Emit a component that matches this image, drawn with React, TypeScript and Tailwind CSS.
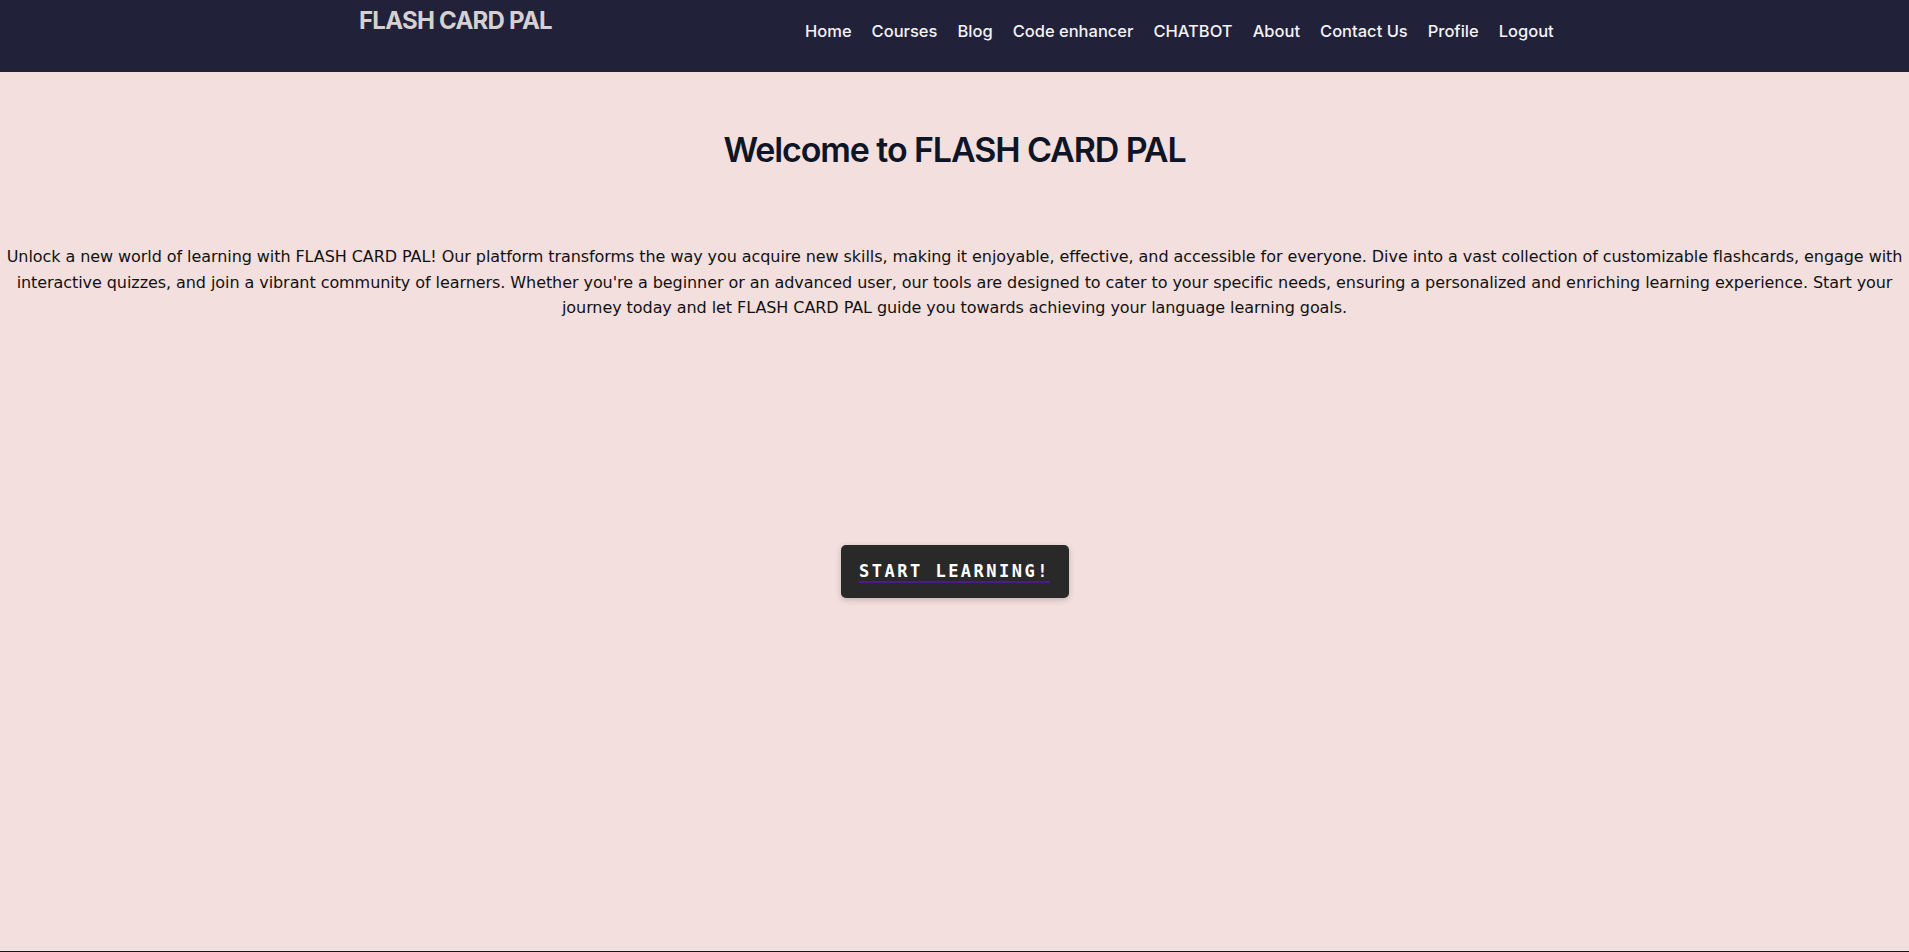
export default function App() {
  const links = ['Home', 'Courses', 'Blog', 'Code enhancer', 'CHATBOT', 'About', 'Contact Us', 'Profile', 'Logout'];

  return (
    <div className="min-h-screen bg-[#f3dfde] font-['DejaVu_Sans',sans-serif]">
      <header className="h-[72px] bg-[#21213a] flex items-start">
        <div className="w-[805px] shrink-0 pl-[359px] pt-[5px] font-['Inter',sans-serif]">
          <span className="text-[24px] leading-[32px] font-bold text-[#d6d0d0] tracking-[-0.75px]">FLASH CARD PAL</span>
        </div>
        <nav className="flex items-center gap-[20px] h-[62px] font-['Inter',sans-serif]">
          {links.map((l) => (
            <a key={l} href="#" className="text-[16.5px] font-medium text-[#f4f2f2]">
              {l}
            </a>
          ))}
        </nav>
      </header>

      <main className="h-[879px] flex flex-col items-center">
        <h1 className="mt-[57px] text-[34px] leading-[41px] font-semibold text-[#0d1526] tracking-[-1.1px] font-['Inter',sans-serif]">
          Welcome to FLASH CARD PAL
        </h1>

        <p className="mt-[74px] whitespace-nowrap text-center text-[16px] leading-[25.6px] text-[#111] tracking-[-0.07px]">
          Unlock a new world of learning with FLASH CARD PAL! Our platform transforms the way you acquire new skills, making it enjoyable, effective, and accessible for everyone. Dive into a vast collection of customizable flashcards, engage with
          <br />
          interactive quizzes, and join a vibrant community of learners. Whether you're a beginner or an advanced user, our tools are designed to cater to your specific needs, ensuring a personalized and enriching learning experience. Start your
          <br />
          journey today and let FLASH CARD PAL guide you towards achieving your language learning goals.
        </p>

        <button className="mt-[224px] w-[228px] h-[53px] rounded-[5px] bg-[#292929] shadow-[0_2px_6px_rgba(0,0,0,0.2)] font-['DejaVu_Sans_Mono',monospace] font-bold text-[17px] tracking-[2.5px] text-white underline decoration-[#4b1a8f] decoration-2 underline-offset-[4px]">
          START LEARNING!
        </button>
      </main>
      <footer className="h-[40px] bg-[#1a1414]" />
    </div>
  );
}
